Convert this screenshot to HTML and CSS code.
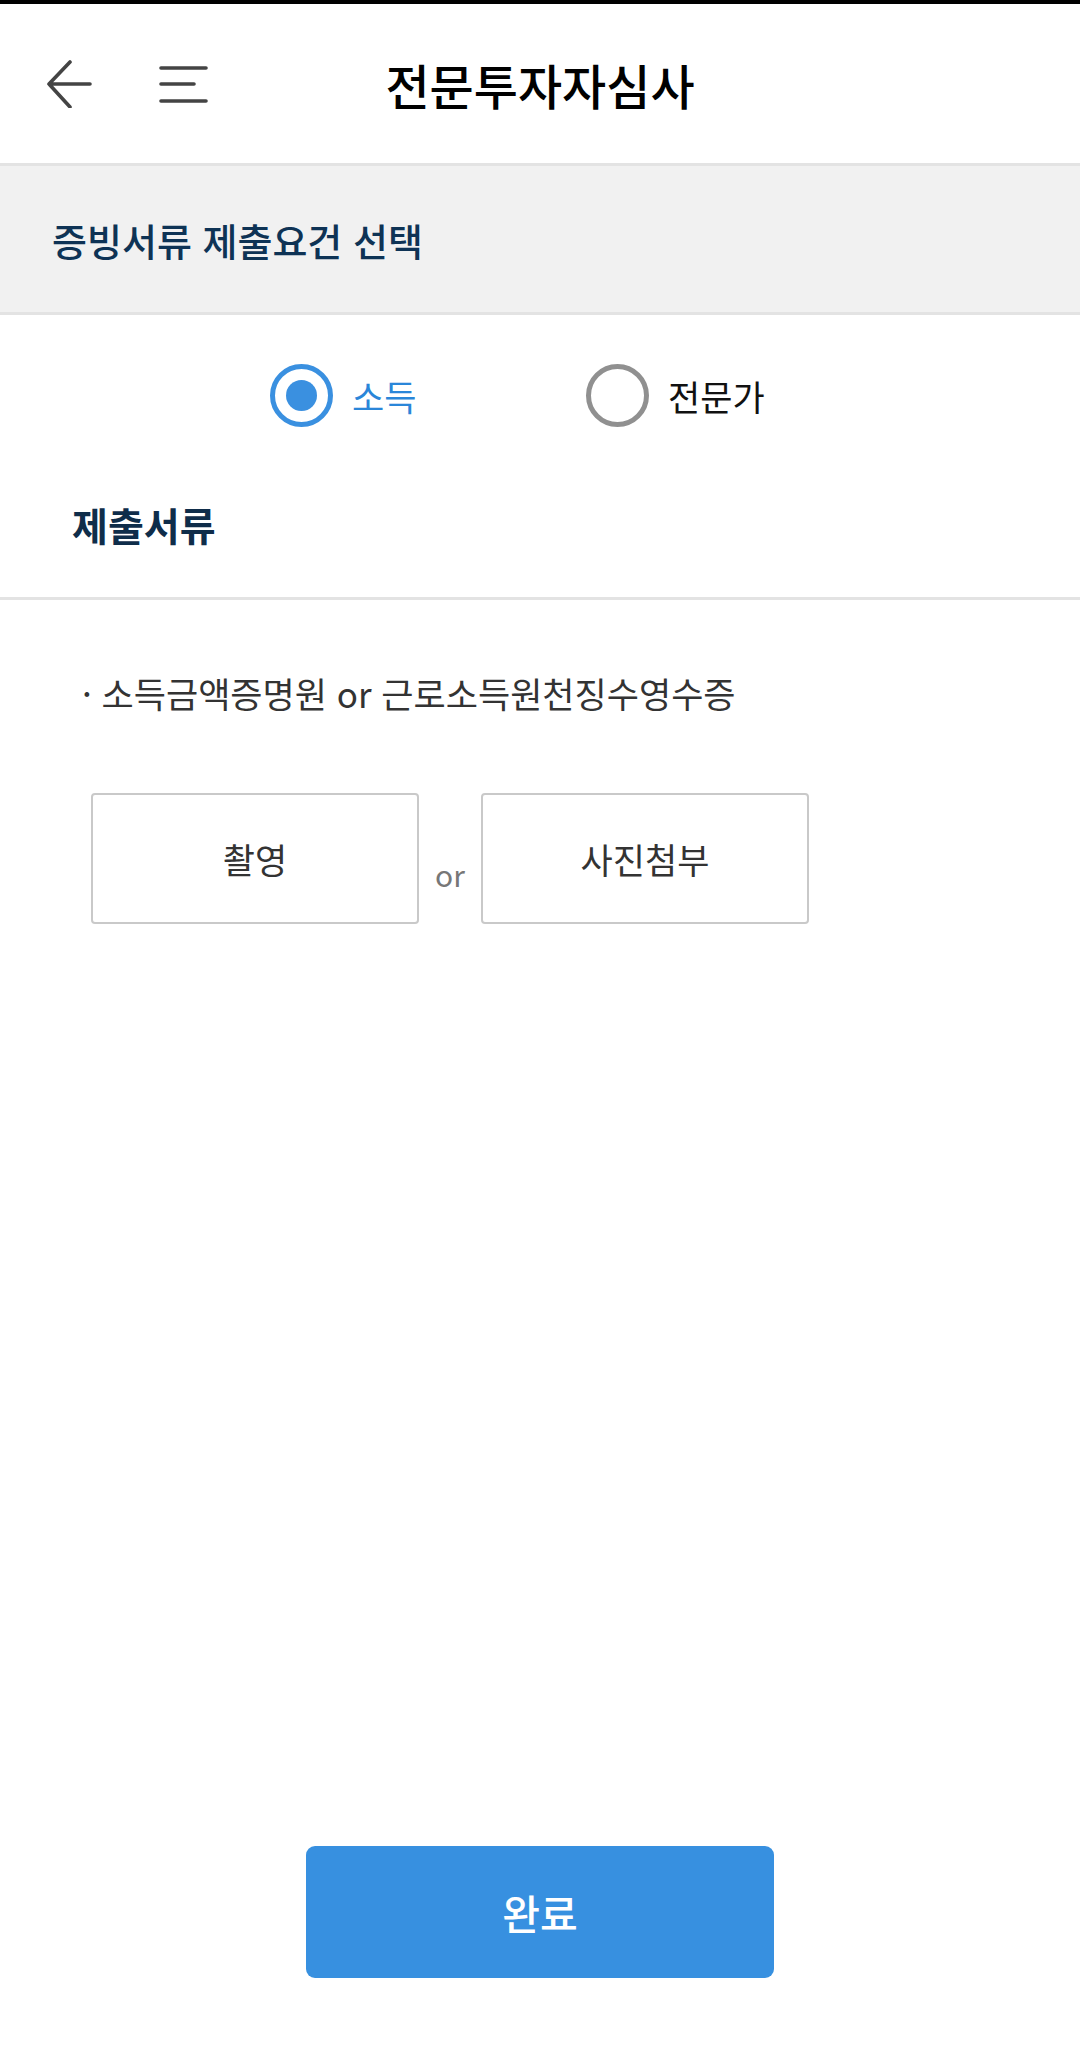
FILE: index.html
```html
<!DOCTYPE html>
<html lang="ko">
<head>
    <meta charset="UTF-8">
    <meta name="viewport" content="width=device-width, initial-scale=1.0">
    <title>전문투자자심사</title>
    <link rel="stylesheet" href="styles.css">
</head>
<body>
    <div class="status-bar"></div>

    <!-- Header -->
    <header class="app-header">
        <div class="header-icons">
            <svg class="icon" width="46" height="48" viewBox="0 0 46 48" aria-label="뒤로">
                <path d="M3 24 H44 M3 24 L24 2 M3 24 L24 47" />
            </svg>
            <svg class="icon" width="50" height="50" viewBox="0 0 50 50" aria-label="메뉴">
                <path d="M3 9 H48 M3 25 H36 M3 42 H48" />
            </svg>
        </div>
        <h1 class="page-title">전문투자자심사</h1>
        <div></div>
    </header>

    <div class="section-bar">증빙서류 제출요건 선택</div>

    <div class="radio-group">
        <label class="radio-item checked">
            <span class="radio-circle"></span>
            <span class="radio-label">소득</span>
        </label>
        <label class="radio-item">
            <span class="radio-circle"></span>
            <span class="radio-label">전문가</span>
        </label>
    </div>

    <h2 class="doc-title">제출서류</h2>
    <div class="divider"></div>

    <p class="doc-item">· 소득금액증명원 or 근로소득원천징수영수증</p>

    <div class="upload-row">
        <button class="upload-btn">촬영</button>
        <span class="upload-or">or</span>
        <button class="upload-btn">사진첨부</button>
    </div>

    <div class="spacer"></div>

    <button class="done-btn">완료</button>
</body>
</html>
```

FILE: styles.css
```css
html, body {
    height: 100%;
}
body {
    margin: 0;
    font-family: "Noto Sans CJK KR", "Noto Sans", sans-serif;
    background: #fff;
    color: #333;
    display: flex;
    flex-direction: column;
    min-height: 100vh;
}
.status-bar {
    height: 4px;
    background: #000;
}
.app-header {
    height: 159px;
    display: grid;
    grid-template-columns: 1fr auto 1fr;
    align-items: center;
}
.header-icons {
    display: flex;
    align-items: center;
    gap: 66px;
    padding-left: 46px;
}
.icon {
    fill: none;
    stroke: #444;
    stroke-width: 3.6;
    stroke-linecap: round;
    stroke-linejoin: round;
}
.page-title {
    margin: 0;
    font-size: 48px;
    font-weight: 500;
    color: #000;
    line-height: 1;
}
.section-bar {
    height: 146px;
    border-top: 3px solid #e3e3e3;
    border-bottom: 3px solid #e3e3e3;
    background: #f1f1f1;
    display: flex;
    align-items: center;
    padding-left: 52px;
    font-size: 38px;
    font-weight: 500;
    color: #0e3355;
}
.radio-group {
    display: flex;
    padding: 49px 0 0 270px;
}
.radio-item {
    display: flex;
    align-items: center;
    gap: 19px;
    font-size: 35px;
    color: #111;
}
.radio-item:first-child {
    width: 316px;
}
.radio-circle {
    box-sizing: border-box;
    width: 63px;
    height: 63px;
    border-radius: 50%;
    border: 5px solid #909090;
    display: flex;
    align-items: center;
    justify-content: center;
}
.radio-item.checked {
    color: #2a86d9;
}
.radio-item.checked .radio-circle {
    border-color: #3a90e0;
}
.radio-item.checked .radio-circle::after {
    content: "";
    width: 31px;
    height: 31px;
    border-radius: 50%;
    background: #3a90e0;
}
.doc-title {
    margin: 78px 0 0 72px;
    font-size: 39px;
    font-weight: 700;
    line-height: 1;
    color: #0f2d4a;
}
.divider {
    margin-top: 53px;
    height: 3px;
    background: #e3e3e3;
}
.doc-item {
    margin: 75px 0 0 82px;
    font-size: 35px;
    line-height: 1;
    color: #333;
}
.upload-row {
    display: flex;
    align-items: center;
    margin: 83px 0 0 91px;
}
.upload-btn {
    box-sizing: border-box;
    width: 328px;
    height: 131px;
    border: 2px solid #c9c9c9;
    border-radius: 4px;
    background: #fff;
    font-family: inherit;
    font-size: 35px;
    color: #333;
}
.upload-or {
    width: 62px;
    text-align: center;
    padding-top: 30px;
    font-size: 30px;
    color: #777;
}
.spacer {
    flex: 1;
}
.done-btn {
    align-self: center;
    width: 468px;
    height: 132px;
    margin-bottom: 68px;
    border: none;
    border-radius: 9px;
    background: #3790e0;
    color: #fff;
    font-family: inherit;
    font-size: 41px;
    font-weight: 500;
}
```
